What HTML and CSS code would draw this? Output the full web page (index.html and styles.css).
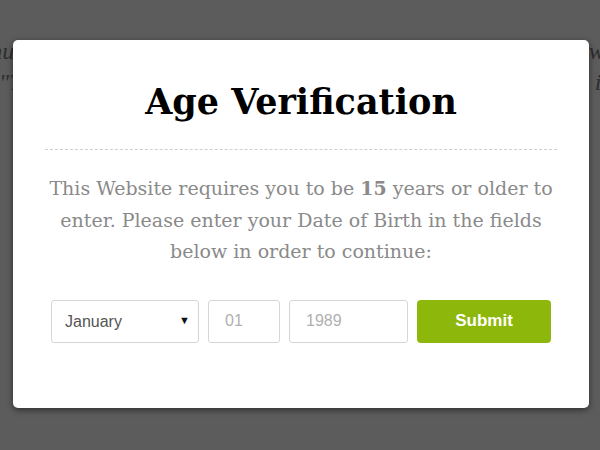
FILE: index.html
```html
<!DOCTYPE html>
<html lang="en">
<head>
    <meta charset="UTF-8">
    <title>Age Verification</title>
    <link rel="stylesheet" href="styles.css">
</head>
<body>
    <div class="page">
        <div class="article-line first"><span>Thus</span><span>was,</span></div>
        <div class="article-line"><span>"The</span><span>it</span></div>
    </div>

    <div class="overlay">
        <div class="age-box">
            <h1 class="age-title">Age Verification</h1>
            <p class="age-text">This Website requires you to be <b>15</b> years or older to enter. Please enter your Date of Birth in the fields below in order to continue:</p>
            <form class="age-form">
                <div class="select-wrap">
                    <select class="field month">
                        <option>January</option>
                        <option>February</option>
                        <option>March</option>
                    </select>
                    <span class="arrow">&#9660;</span>
                </div>
                <input type="text" class="field day" placeholder="01">
                <input type="text" class="field year" placeholder="1989">
                <button type="submit" class="submit-btn">Submit</button>
            </form>
        </div>
    </div>
</body>
</html>
```

FILE: styles.css
```css
body{
    margin: 0;
    background-color: #5c5c5c;
    height: 450px;
    overflow: hidden;
}
.page{
    padding-top: 36px;
    overflow: hidden;
}
.article-line{
    display: flex;
    justify-content: space-between;
    margin: 0 -8px 0 -1px;
    font-family: "Liberation Serif", serif;
    font-style: italic;
    font-size: 24px;
    line-height: 31px;
    color: #2e2e2e;
}
.article-line.first{
    margin: 0 -32px 0 -23px;
}
.overlay{
    position: absolute;
    top: 0;
    left: 0;
    width: 600px;
    height: 450px;
}
.age-box{
    position: absolute;
    top: 40px;
    left: 13px;
    width: 576px;
    height: 368px;
    box-sizing: border-box;
    background-color: #fff;
    border-radius: 5px;
    box-shadow: 0 2px 6px rgba(0, 0, 0, 0.5);
    padding: 0 32px;
    text-align: center;
}
.age-title{
    margin: 0;
    padding: 39px 0 24px;
    font-family: "DejaVu Serif", serif;
    font-weight: bold;
    font-size: 35px;
    line-height: 46px;
    color: #000;
    border-bottom: 1px dashed #cfcfcf;
}
.age-text{
    margin: 23px 0 0;
    font-family: "DejaVu Serif", serif;
    font-size: 19px;
    line-height: 31.5px;
    color: #8a8a8a;
}
.age-form{
    display: flex;
    justify-content: center;
    gap: 9px;
    margin-top: 32px;
}
.select-wrap{
    position: relative;
}
.field{
    box-sizing: border-box;
    height: 43px;
    border: 1px solid #d6d6d6;
    border-radius: 3px;
    background: #fff;
    font-family: "Liberation Sans", Arial, sans-serif;
    font-size: 16px;
    padding: 0 16px;
    outline: none;
}
.field::placeholder{
    color: #b0b0b0;
}
.month{
    width: 148px;
    padding: 0 13px;
    color: #555;
    appearance: none;
    -webkit-appearance: none;
}
.arrow{
    position: absolute;
    right: 9px;
    top: 14px;
    font-size: 11px;
    color: #111;
    pointer-events: none;
}
.day{
    width: 72px;
}
.year{
    width: 119px;
}
.submit-btn{
    width: 134px;
    height: 43px;
    border: none;
    border-radius: 4px;
    background-color: #8db70a;
    color: #fff;
    font-family: "Liberation Sans", Arial, sans-serif;
    font-weight: bold;
    font-size: 17px;
}
```
